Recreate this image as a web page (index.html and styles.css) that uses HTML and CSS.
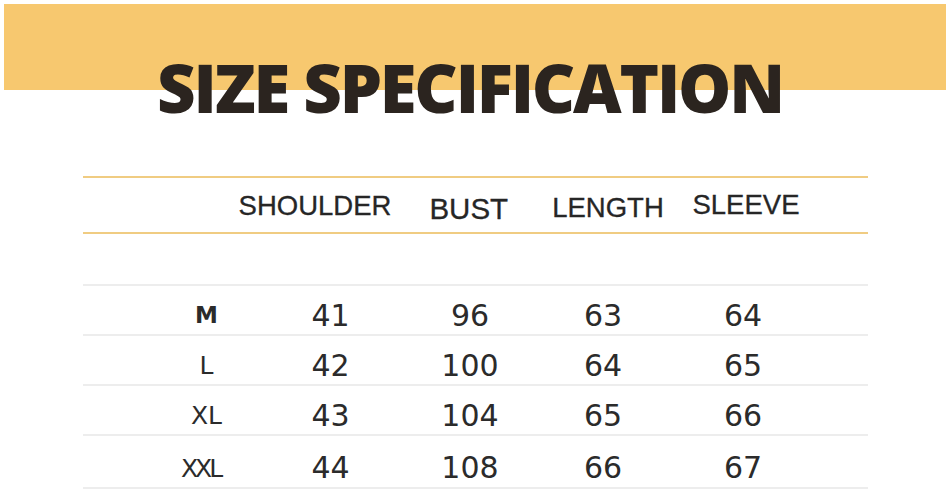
FILE: index.html
```html
<!DOCTYPE html>
<html>
<head>
<meta charset="utf-8">
<link rel="stylesheet" href="styles.css">
</head>
<body>
<div class="band">
  <h1 class="title">SIZE SPECIFICATION</h1>
</div>
<div class="table">
  <div class="head">
    <span class="h h-shoulder">SHOULDER</span>
    <span class="h h-bust">BUST</span>
    <span class="h h-length">LENGTH</span>
    <span class="h h-sleeve">SLEEVE</span>
  </div>
  <div class="spacer"></div>
  <div class="row">
    <span class="size size-m">M</span><span>41</span><span>96</span><span>63</span><span>64</span>
  </div>
  <div class="row">
    <span class="size">L</span><span>42</span><span>100</span><span>64</span><span>65</span>
  </div>
  <div class="row">
    <span class="size">XL</span><span>43</span><span>104</span><span>65</span><span>66</span>
  </div>
  <div class="row row-last">
    <span class="size size-xxl">XXL</span><span>44</span><span>108</span><span>66</span><span>67</span>
  </div>
</div>
</body>
</html>
```

FILE: styles.css
```css
html, body {
  margin: 0;
  padding: 0;
  background: #ffffff;
}

.band {
  margin: 4px 5px 0 4px;
  height: 86px;
  background: #f7c86f;
}

.title {
  margin: 0;
  padding: 50px 10px 0 0;
  text-align: center;
  font-family: "Open Sans", "DejaVu Sans", sans-serif;
  font-weight: 800;
  font-size: 67px;
  line-height: 67px;
  color: #2b241f;
  letter-spacing: -2.2px;
}

.table {
  margin: 86px 83px 0 83px;
}

.head {
  box-sizing: border-box;
  height: 58px;
  border-top: 2px solid #f0cc82;
  border-bottom: 2px solid #f0cc82;
  display: grid;
  grid-template-columns: 155px 146.5px 138px 138px;
  padding-left: 154.5px;
  align-items: center;
  font-family: "Liberation Sans", Arial, sans-serif;
  font-size: 27.5px;
  color: #262626;
  -webkit-text-stroke: 0.3px #262626;
}

.h {
  text-align: center;
  line-height: 1;
}

.h-shoulder { padding-top: 2px; }
.h-bust { padding-top: 8px; font-size: 29.5px; padding-left: 6px; }
.h-length { padding-top: 6px; }
.h-sleeve { padding-top: 0; }

.spacer {
  height: 50px;
  border-bottom: 2px solid #ededed;
}

.row {
  box-sizing: border-box;
  height: 50px;
  border-bottom: 2px solid #ededed;
  display: grid;
  grid-template-columns: 125px 123px 156px 110px 170px;
  padding-left: 61px;
  padding-top: 11px;
  align-items: center;
  font-family: "DejaVu Sans", sans-serif;
  font-size: 30px;
  color: #2b2b2b;
}

.row-last {
  height: 53px;
  padding-top: 13px;
}

.row > span {
  text-align: center;
  line-height: 1;
}

.size {
  font-size: 25px;
}

.size-m {
  font-weight: bold;
  font-size: 23px;
}

.size-xxl {
  letter-spacing: -3px;
  padding-right: 12px;
}
```
